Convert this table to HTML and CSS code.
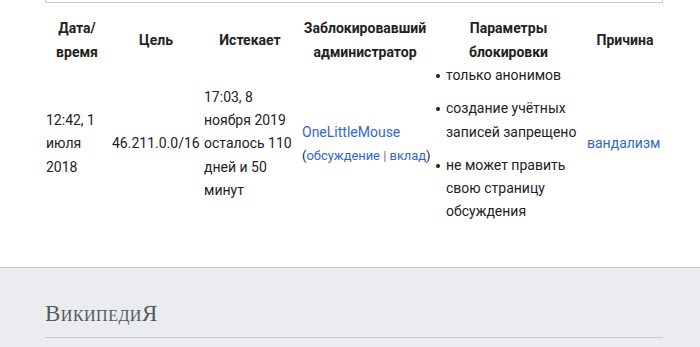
FILE: index.html
```html
<!DOCTYPE html>
<html lang="ru">
<head>
<meta charset="utf-8">
<title>Журнал блокировок</title>
<link rel="stylesheet" href="styles.css">
</head>
<body>
<div class="page">
  <div class="topbox"></div>
  <table class="blocks">
    <colgroup>
      <col class="c1"><col class="c2"><col class="c3"><col class="c4"><col class="c5"><col class="c6">
    </colgroup>
    <thead>
      <tr>
        <th>Дата/<wbr>время</th>
        <th>Цель</th>
        <th>Истекает</th>
        <th>Заблокировавший администратор</th>
        <th>Параметры блокировки</th>
        <th>Причина</th>
      </tr>
    </thead>
    <tbody>
      <tr>
        <td>12:42, 1 июля 2018</td>
        <td class="nowrap">46.211.0.0/16</td>
        <td>17:03, 8 ноября 2019 осталось 110 дней и 50 минут</td>
        <td class="admin"><a href="#">OneLittleMouse</a><br><span class="tools">(<a href="#">обсуждение</a> <span class="sep">|</span> <a href="#">вклад</a>)</span></td>
        <td>
          <ul class="params">
            <li>только анонимов</li>
            <li>создание учётных записей запрещено</li>
            <li>не может править свою страницу обсуждения</li>
          </ul>
        </td>
        <td><a href="#">вандализм</a></td>
      </tr>
    </tbody>
  </table>
</div>
<footer class="footer">
  <div class="footer-inner">
    <div class="logo">ВикипедиЯ</div>
  </div>
</footer>
</body>
</html>
```

FILE: styles.css
```css
html, body {
  margin: 0;
  padding: 0;
  background: #fff;
}
body {
  font-family: Roboto, "Noto Sans", "Liberation Sans", sans-serif;
  font-size: 14px;
  color: #222;
  height: 347px;
  overflow: hidden;
}
.page {
  padding: 0 35px 0 44px;
}
.topbox {
  height: 2px;
  margin: 0 2px 0 1px;
  border: 1px solid #c8ccd1;
  border-top: none;
}
.blocks {
  margin-top: 13px;
  border-collapse: collapse;
  border-spacing: 0;
  table-layout: fixed;
  width: 621px;
}
.c1 { width: 66px; }
.c2 { width: 92px; }
.c3 { width: 96px; }
.c4 { width: 134px; }
.c5 { width: 153px; }
.c6 { width: 80px; }
.blocks th {
  font-weight: 700;
  line-height: 24px;
  padding: 0 2px;
  text-align: center;
  vertical-align: middle;
}
.blocks td {
  line-height: 23.3px;
  padding: 0 2px;
  text-align: left;
  vertical-align: middle;
}
.blocks td.nowrap {
  white-space: nowrap;
}
.blocks td.admin {
  padding-left: 4px;
  padding-right: 0;
}
a {
  color: #3366cc;
  text-decoration: none;
}
.tools {
  font-size: 12.9px;
  color: #222;
}
.tools .sep {
  color: #72777d;
}
.params {
  list-style: none;
  margin: 0;
  padding: 0;
}
.params li {
  position: relative;
  padding-left: 12px;
}
.params li + li {
  margin-top: 10px;
}
.params li::before {
  content: "";
  position: absolute;
  left: 2px;
  top: 10px;
  width: 4px;
  height: 4px;
  border-radius: 50%;
  background: #222;
}
.footer {
  margin-top: 43px;
  border-top: 1px solid #c8ccd1;
  background: #eaecf0;
  padding-bottom: 20px;
}
.footer-inner {
  margin: 0 37px 0 45px;
  padding: 31px 0 8px;
  border-bottom: 1px solid #c8ccd1;
}
.logo {
  font-family: "Liberation Serif", "DejaVu Serif", serif;
  font-variant: small-caps;
  font-size: 23px;
  letter-spacing: 0.5px;
  line-height: 30px;
  color: #54595d;
}
```
